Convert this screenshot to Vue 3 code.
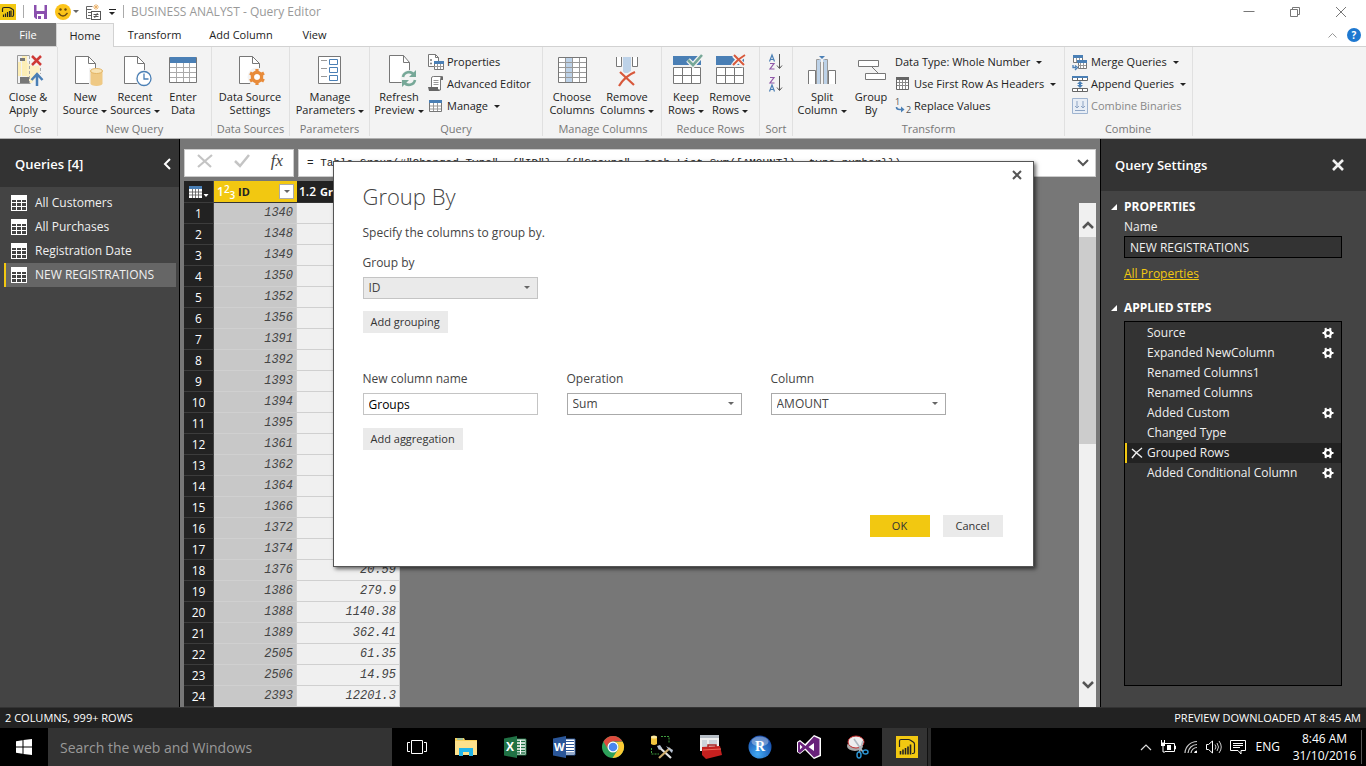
<script setup>
import { ref } from 'vue'

const queries = ['All Customers', 'All Purchases', 'Registration Date', 'NEW REGISTRATIONS']
const activeQuery = ref('NEW REGISTRATIONS')
const queryName = ref('NEW REGISTRATIONS')
const formula = ref('= Table.Group(#"Changed Type", {"ID"}, {{"Groups", each List.Sum([AMOUNT]), type number}})')
const columnName = ref('Groups')
const search = ref('')

const steps = [
  { name: 'Source', gear: true },
  { name: 'Expanded NewColumn', gear: true },
  { name: 'Renamed Columns1' },
  { name: 'Renamed Columns' },
  { name: 'Added Custom', gear: true },
  { name: 'Changed Type' },
  { name: 'Grouped Rows', gear: true },
  { name: 'Added Conditional Column', gear: true },
]
const activeStep = ref('Grouped Rows')

const ids = [1340, 1348, 1349, 1350, 1352, 1356, 1391, 1392, 1393, 1394, 1395, 1361,
  1362, 1364, 1366, 1372, 1374, 1376, 1386, 1388, 1389, 2505, 2506, 2393]
const sums = { 1376: '20.59', 1386: '279.9', 1388: '1140.38', 1389: '362.41', 2505: '61.35', 2506: '14.95', 2393: '12201.3' }
</script>

<template>
  <div class="screen">
    <div class="window">
      <header class="titlebar">
        <svg class="logo" width="16" height="16" viewBox="0 0 16 16">
          <rect width="16" height="16" fill="#f2c811" />
          <path d="M2.500 8V5q0-1.500 1.500-1.500h5q1 0 1.500.5l2 1.200q1 .5 1 1.300V11q0 1.500-1.500 1.500" fill="none" stroke="#222" stroke-width="1.200" />
          <path d="M3.500 13v-2.500M5.500 13V9.500M7.500 13V8M9.500 13V7M11 13V6.500" stroke="#222" stroke-width="1.200" />
        </svg>
        <span class="vbar"></span>
        <button class="plain" aria-label="Save">
          <svg width="16" height="16" viewBox="0 0 16 16">
            <path d="M1 1h13v14H3L1 13z" fill="#8a4fae" /><path d="M3.500 1h8v6h-8z" fill="#fff" /><path d="M4 10h7v5H4z" fill="#fff" /><path d="M5 12h3v3H5z" fill="#8a4fae" />
          </svg>
        </button>
        <button class="plain smile" aria-label="Feedback">
          <svg width="16" height="16" viewBox="0 0 16 16">
            <circle cx="8" cy="8" r="8" fill="#fcc419" /><circle cx="5.500" cy="5.500" r="1.200" fill="#6b4b10" /><circle cx="10.500" cy="5.500" r="1.200" fill="#6b4b10" /><path d="M3.500 9q4.500 6 9 0" fill="none" stroke="#6b4b10" stroke-width="1.300" />
          </svg>
          <i class="caret soft"></i>
        </button>
        <button class="plain" aria-label="Refresh all">
          <svg width="16" height="16" viewBox="0 0 16 16">
            <path d="M.5 2.500h6M.5 5.500h5M.5 2.500v12h4M2 8.500h3M2 11.500h3" stroke="#666" fill="none" />
            <rect x="5.500" y="7.500" width="9" height="8" fill="#fff" stroke="#555" />
            <path d="M7.500 10.500h5M7.500 12.500h5M11.500 9l-3 5" stroke="#555" />
            <path d="M10 0v6M7 3h6M8 1l4 4M12 1l-4 4" stroke="#e8a95a" stroke-width=".8" />
          </svg>
        </button>
        <button class="plain overflow" aria-label="Customize toolbar"><i></i><i class="caret"></i></button>
        <span class="vbar"></span>
        <span class="title">BUSINESS ANALYST - Query Editor</span>
        <div class="wincontrols">
          <button class="plain" aria-label="Minimize"><svg width="12" height="12" viewBox="0 0 12 12"><path d="M.5 5.500h11" stroke="#777" /></svg></button>
          <button class="plain" aria-label="Restore"><svg width="12" height="12" viewBox="0 0 12 12"><path d="M1.500 3.500h7v7h-7zM3.500 3V1.500h7v7H9" fill="none" stroke="#777" /></svg></button>
          <button class="plain" aria-label="Close"><svg width="12" height="12" viewBox="0 0 12 12"><path d="M1 1l10 10M11 1L1 11" stroke="#777" /></svg></button>
        </div>
      </header>

      <nav class="tabs">
        <button class="tab file">File</button>
        <button class="tab home">Home</button>
        <button class="tab transform">Transform</button>
        <button class="tab addcol">Add Column</button>
        <button class="tab view">View</button>
        <div class="tabtools">
          <svg width="9" height="6" viewBox="0 0 9 6"><path d="M.5 5.500l4-4 4 4" fill="none" stroke="#999" /></svg>
          <button class="help" aria-label="Help">?</button>
        </div>
      </nav>

      <section class="ribbon">
        <div class="group g-close">
          <div class="items">
            <button class="big b56">
              <svg viewBox="0 0 32 32"><path d="M5.500 1.500h12M5.500 1.500v28h13" stroke="#999" fill="none" /><path d="M6 8h3v14H6zM10 2h5v20h-5z" fill="#fdeeb5" /><path d="M15 8q4 6 12 3l1 6-8 12h-3l-2-6z" fill="#fdf1c4" /><path d="M17.500 2v27M28.500 14v6" stroke="#aaa" fill="none" stroke-dasharray="3 2" /><path d="M8 4h5v3H8zM8 23h9v6H8z" fill="#777" /><path d="M20 2l9 9M29 2l-9 9" stroke="#cf3a36" stroke-width="2.500" /><path d="M25 32V21M19.500 26l5.500-6 5.500 6" fill="none" stroke="#4a7fb5" stroke-width="2.500" /></svg>
              <span>Close &amp;</span><span>Apply<i class="caret"></i></span>
            </button>
          </div>
          <div class="gname">Close</div>
        </div>
        <div class="group g-new">
          <div class="items">
            <button class="big b50">
              <svg viewBox="0 0 32 32"><path d="M6.500 2.500h13l7 7v20h-20z" fill="#fff" stroke="#777" /><path d="M19.500 2.500v7h7" fill="none" stroke="#777" /><path d="M20 14h15v19H20z" fill="#f3f3f3" /><path d="M21.500 17v12.500a6 2.500 0 0 0 12 0V17z" fill="#efc984" /><ellipse cx="27.500" cy="17" rx="6" ry="2.500" fill="#f8e3b4" stroke="#e3b566" /></svg>
              <span>New</span><span>Source<i class="caret"></i></span>
            </button>
            <button class="big b50">
              <svg viewBox="0 0 32 32"><path d="M5.500 2.500h13l7 7v20h-20z" fill="#fff" stroke="#777" /><path d="M18.500 2.500v7h7" fill="none" stroke="#777" /><circle cx="25" cy="24.500" r="8.500" fill="#f3f3f3" /><circle cx="25" cy="24.500" r="7" fill="#fff" stroke="#4a7fb5" stroke-width="1.300" /><path d="M25 19.500v5.500h4.500" fill="none" stroke="#4a7fb5" stroke-width="1.300" /></svg>
              <span>Recent</span><span>Sources<i class="caret"></i></span>
            </button>
            <button class="big b46">
              <svg viewBox="0 0 32 32"><path d="M2.500 3.500h27v25h-27z" fill="#fff" stroke="#777" /><path d="M3 3h26v6H3z" fill="#4a7fb5" /><path d="M3 13.500h26M3 18.500h26M3 23.500h26M9.500 9v19M16.500 9v19M22.500 9v19" stroke="#aaa" /></svg>
              <span>Enter</span><span>Data</span>
            </button>
          </div>
          <div class="gname">New Query</div>
        </div>
        <div class="group g-source">
          <div class="items">
            <button class="big b76">
              <svg viewBox="0 0 32 32"><path d="M5.500 2.500h13l7 7v20h-20z" fill="#fff" stroke="#777" /><path d="M18.500 2.500v7h7" fill="none" stroke="#777" /><circle cx="23" cy="23" r="9.500" fill="#f3f3f3" /><circle cx="23" cy="23" r="4.500" fill="none" stroke="#e88b3a" stroke-width="3.500" /><path d="M23 19v-4M23 27v4M19.500 21l-3.500-2M26.500 25l3.500 2M19.500 25l-3.500 2M26.500 21l3.500-2" stroke="#e88b3a" stroke-width="3.200" /><circle cx="23" cy="23" r="2.800" fill="#fff" /></svg>
              <span>Data Source</span><span>Settings</span>
            </button>
          </div>
          <div class="gname">Data Sources</div>
        </div>
        <div class="group g-params">
          <div class="items">
            <button class="big b76">
              <svg viewBox="0 0 32 32"><path d="M4.500 2.500h22v27h-22z" fill="#fff" stroke="#777" /><path d="M7 6.500h6M7 14.500h6M7 22.500h6" stroke="#999" /><path d="M15.500 5.500h8v5h-8zM15.500 13.500h8v5h-8zM15.500 21.500h8v5h-8z" fill="#fff" stroke="#4a7fb5" /></svg>
              <span>Manage</span><span>Parameters<i class="caret"></i></span>
            </button>
          </div>
          <div class="gname">Parameters</div>
        </div>
        <div class="group g-query">
          <div class="items">
            <button class="big b54">
              <svg viewBox="0 0 32 32"><path d="M6.500 1.500h14l6 7v20h-20z" fill="#fff" stroke="#777" /><path d="M20.500 1.500v7h6" fill="none" stroke="#777" /><circle cx="26" cy="24.500" r="8.500" fill="#f3f3f3" /><path d="M20 23a6 6 0 0 1 11-2M32 26a6 6 0 0 1-11 2" fill="none" stroke="#77a898" stroke-width="2.600" /><path d="M33 16v7h-7zM19 33v-7h7z" fill="#77a898" /></svg>
              <span>Refresh</span><span>Preview<i class="caret"></i></span>
            </button>
            <div class="stack">
              <button class="small">
                <svg viewBox="0 0 16 16"><path d="M6 12.500H.5V.5h7l3 3V7" fill="#fff" stroke="#777" /><path d="M7.500.5v3h3" fill="none" stroke="#777" /><circle cx="3" cy="6" r="1" fill="#777" /><circle cx="3" cy="9.500" r="1" fill="#777" /><path d="M6.500 8.500h9v7h-9z" fill="#fff" stroke="#777" /><path d="M6 7h10v3H6z" fill="#4a7fb5" /><path d="M6 12.500h9M9.500 10v5M12.500 10v5" stroke="#999" /></svg>Properties
              </button>
              <button class="small">
                <svg viewBox="0 0 16 16"><path d="M3.500 11V2q0-1.500 2-1.500h9q-2 0-2 2V14H2" fill="#fff" stroke="#777" /><path d="M13 1h2v3h-2zM0 11h10v2l2 2H1z" fill="#666" /><path d="M5.500 4.500h5M5.500 6.500h5M5.500 8.500h5" stroke="#999" /></svg>Advanced Editor
              </button>
              <button class="small">
                <svg viewBox="0 0 16 16"><path d="M1.500 2.500h12v11h-12z" fill="#fff" stroke="#777" /><path d="M1 2h13v3H1z" fill="#4a7fb5" /><path d="M2 8h11M2 11h11M5.500 5v8M9.500 5v8" stroke="#999" /></svg>Manage<i class="caret"></i>
              </button>
            </div>
          </div>
          <div class="gname">Query</div>
        </div>
        <div class="group g-cols">
          <div class="items">
            <button class="big b50">
              <svg viewBox="0 0 32 32"><path d="M2.500 3.500h28v25h-28z" fill="#fff" stroke="#777" /><path d="M9 4h8v24H9z" fill="#bdd2e8" /><path d="M3 8.500h27M3 13.500h27M3 18.500h27M3 23.500h27M9.500 4v24M16.500 4v24M23.500 4v24" stroke="#999" /></svg>
              <span>Choose</span><span>Columns</span>
            </button>
            <button class="big b60">
              <svg viewBox="0 0 32 32"><path d="M5.500 3v9.500h5V3M21.500 3v9.500h5V3" fill="#fff" stroke="#777" /><path d="M12 3h8v16h-8z" fill="#bdd2e8" /><path d="M9 18l14 13M23 18Q15 22 9 32" stroke="#f3f3f3" stroke-width="5" fill="none" /><path d="M9 18l14 13M24 18Q14 22 8 32" stroke="#d8583b" stroke-width="2.200" fill="none" /></svg>
              <span>Remove</span><span>Columns<i class="caret"></i></span>
            </button>
          </div>
          <div class="gname">Manage Columns</div>
        </div>
        <div class="group g-rows">
          <div class="items">
            <button class="big b44">
              <svg viewBox="0 0 32 32"><path d="M3 2h28v9H3z" fill="#4a7fb5" /><path d="M3.500 13.500h27v16h-27z" fill="#fff" stroke="#777" /><path d="M3 21.500h27M12.500 14v15M21.500 14v15" stroke="#777" /><path d="M18 6l5 5L32 1" stroke="#f3f3f3" stroke-width="5" fill="none" /><path d="M18 6l5 5L32 1" stroke="#77a898" stroke-width="2.600" fill="none" /></svg>
              <span>Keep</span><span>Rows<i class="caret"></i></span>
            </button>
            <button class="big b44">
              <svg viewBox="0 0 32 32"><path d="M2 2h28v9H2z" fill="#4a7fb5" /><path d="M2.500 13.500h27v16h-27z" fill="#fff" stroke="#777" /><path d="M2 21.500h27M11.500 14v15M20.500 14v15" stroke="#777" /><path d="M20 1l10 11M31 1Q24 5 19 12" stroke="#f3f3f3" stroke-width="5" fill="none" /><path d="M20 1l10 10M31 1Q24 5 19 11" stroke="#d8583b" stroke-width="2" fill="none" /></svg>
              <span>Remove</span><span>Rows<i class="caret"></i></span>
            </button>
          </div>
          <div class="gname">Reduce Rows</div>
        </div>
        <div class="group g-sort">
          <div class="stack">
            <button class="small sort" aria-label="Sort ascending"><svg viewBox="0 0 16 16"><path d="M1.500 7.500L4 1l2.500 6.500M2.500 5.500h3" fill="none" stroke="#4a7fb5" stroke-width="1.200" /><path d="M2 9.500h4L2 15h4.500" fill="none" stroke="#9058a8" stroke-width="1.200" /><path d="M11.500 0v14M9 11.500l2.500 3 2.500-3" fill="none" stroke="#555" /></svg></button>
            <button class="small sort" aria-label="Sort descending"><svg viewBox="0 0 16 16"><path d="M2 1.500h4L2 7h4.500" fill="none" stroke="#9058a8" stroke-width="1.200" /><path d="M1.500 15.500L4 9l2.500 6.500M2.500 13.500h3" fill="none" stroke="#4a7fb5" stroke-width="1.200" /><path d="M11.500 0v14M9 11.500l2.500 3 2.500-3" fill="none" stroke="#555" /></svg></button>
          </div>
          <div class="gname">Sort</div>
        </div>
        <div class="group g-trans">
          <div class="items">
            <button class="big b54">
              <svg viewBox="0 0 32 32"><path d="M2.500 30V16.500h7V30M22.500 30V16.500h7V30" fill="#fff" stroke="#777" /><path d="M11 5h4v25h-4zM17 5h4v25h-4z" fill="#bdd2e8" /><path d="M10.500 30V5.500h3M21.500 30V5.500h-3M14.500 8v22M17.500 8v22" stroke="#999" fill="none" /><path d="M13 2h6l-3 3z" fill="#4a7fb5" /></svg>
              <span>Split</span><span>Column<i class="caret"></i></span>
            </button>
            <button class="big b44">
              <svg viewBox="0 0 32 32"><path d="M3.500 6.500h20v6h-20zM10.500 19.500h20v6h-20z" fill="#fff" stroke="#777" /><path d="M17 13l6 6" stroke="#777" /></svg>
              <span>Group</span><span>By</span>
            </button>
            <div class="stack">
              <button class="small">Data Type: Whole Number<i class="caret"></i></button>
              <button class="small">
                <svg viewBox="0 0 16 16"><path d="M1.500 1.500h12v12h-12z" fill="#fff" stroke="#666" /><path d="M1 1h13v3H1z" fill="#666" /><path d="M2 6.500h11M2 9.500h11M4.500 4v9M7.500 4v9M10.500 4v9" stroke="#888" /></svg>Use First Row As Headers<i class="caret"></i>
              </button>
              <button class="small">
                <svg viewBox="0 0 16 16"><text x="0" y="7" font-size="9" fill="#555">1</text><text x="11" y="15" font-size="9" fill="#555">2</text><path d="M1.500 9q0 2.500 3 2.500h3" fill="none" stroke="#4a7fb5" stroke-width="1.600" /><path d="M6 8.500l3.500 3L6 14.500z" fill="#4a7fb5" /></svg>Replace Values
              </button>
            </div>
          </div>
          <div class="gname">Transform</div>
        </div>
        <div class="group g-combine">
          <div class="stack">
            <button class="small">
              <svg viewBox="0 0 16 16"><path d="M1.500 1.500h9v7h-9zM6.500 7.500h8v7h-8z" fill="#fff" stroke="#777" /><path d="M1 1h10v3H1zM5 6h10v3H5z" fill="#4a7fb5" /><path d="M4.500 4v4M7.500 4v2M8.500 9v5M11.500 9v5M6 11.500h8" stroke="#999" /><path d="M1 11v2.500h3M3 11.500l2.500 2L3 16" fill="none" stroke="#4a7fb5" stroke-width="1.300" /></svg>Merge Queries<i class="caret"></i>
            </button>
            <button class="small">
              <svg viewBox="0 0 16 16"><path d="M.5 1.500h15v3H.5zM.5 12.500h15v3H.5z" fill="#fff" stroke="#666" /><path d="M0 0h16v2H0z" fill="#4a7fb5" /><path d="M5.500 2v3M10.500 2v3M5.500 12v3M10.500 12v3" stroke="#666" /><path d="M8 5l3 3H9v1h2l-3 3-3-3h2V8H5z" fill="#4a7fb5" /></svg>Append Queries<i class="caret"></i>
            </button>
            <button class="small" disabled>
              <svg viewBox="0 0 16 16"><path d="M.5.5h15v15H.5z" fill="#e8eef6" stroke="#9fb4d0" /><path d="M5 3v7M3 8l2 2 2-2M11 3v7M9 8l2 2 2-2M3 12.500h10" fill="none" stroke="#8da4c4" /></svg>Combine Binaries
            </button>
          </div>
          <div class="gname">Combine</div>
        </div>
      </section>

      <main class="work">
        <aside class="queries">
          <h2 class="panelhead">Queries [4]
            <button class="plain" aria-label="Collapse"><svg width="8" height="12" viewBox="0 0 8 12"><path d="M7 1L2 6l5 5" fill="none" stroke="#fff" stroke-width="2" /></svg></button>
          </h2>
          <div class="qlist">
            <button v-for="q in queries" :key="q" class="query" :class="{ on: q === activeQuery }" @click="activeQuery = q">
              <svg width="16" height="16" viewBox="0 0 16 16"><path d="M0 0h16v16H0z" fill="#fff" /><path d="M1 5h4v2H1zM6 5h4v2H6zM11 5h4v2h-4zM1 8h4v3H1zM6 8h4v3H6zM11 8h4v3h-4zM1 12h4v3H1zM6 12h4v3H6zM11 12h4v3h-4z" fill="#444" /></svg>{{ q }}
            </button>
          </div>
        </aside>

        <section class="center">
          <div class="fbar">
            <div class="fbuttons">
              <button class="plain" aria-label="Cancel edit"><svg width="16" height="16" viewBox="0 0 16 16"><path d="M1 2l13 12M15 2L1 14" stroke="#c4c4c4" stroke-width="2.200" /></svg></button>
              <button class="plain" aria-label="Accept edit"><svg width="16" height="16" viewBox="0 0 16 16"><path d="M1 8l5 5L15 2" fill="none" stroke="#c4c4c4" stroke-width="2.500" /></svg></button>
              <button class="plain fx" aria-label="Insert step">fx</button>
            </div>
            <div class="formula">
              <input v-model="formula" aria-label="Formula" spellcheck="false">
              <svg width="12" height="8" viewBox="0 0 12 8"><path d="M1 1l5 5 5-5" fill="none" stroke="#555" stroke-width="2" /></svg>
            </div>
          </div>
          <div class="gridarea">
            <table class="grid">
              <thead>
                <tr>
                  <th class="num">
                    <svg width="20" height="12" viewBox="0 0 20 12"><path d="M0 0h13v12H0z" fill="#fff" /><path d="M0 0h13v3H0z" fill="#4a7fb5" /><path d="M0 6h13M0 9h13M3.500 3v9M6.500 3v9M9.500 3v9" stroke="#555" stroke-width=".8" /><path d="M14.500 8h5L17 11z" fill="#fff" /></svg>
                  </th>
                  <th class="idcol"><div class="th"><span class="digits">1<sup>2</sup><sub>3</sub></span><b>ID</b><button class="filter" aria-label="Filter ID"><i class="caret soft"></i></button></div></th>
                  <th class="sumcol"><div class="th"><span class="dec">1.2</span><b>Groups</b></div></th>
                </tr>
              </thead>
              <tbody>
                <tr v-for="(id, i) in ids" :key="id">
                  <td class="num">{{ i + 1 }}</td><td class="idcol">{{ id }}</td><td class="sumcol">{{ sums[id] }}</td>
                </tr>
              </tbody>
            </table>
            <div class="scroll">
              <svg width="12" height="8" viewBox="0 0 12 8"><path d="M1 7l5-5 5 5" fill="none" stroke="#555" stroke-width="2.500" /></svg>
              <div class="thumb"></div>
              <svg width="12" height="8" viewBox="0 0 12 8"><path d="M1 1l5 5 5-5" fill="none" stroke="#555" stroke-width="2.500" /></svg>
            </div>
          </div>
        </section>

        <aside class="settings">
          <h2 class="panelhead">Query Settings
            <button class="plain" aria-label="Close settings"><svg width="12" height="12" viewBox="0 0 12 12"><path d="M1 1l10 10M11 1L1 11" stroke="#f0f0f0" stroke-width="2.600" /></svg></button>
          </h2>
          <div class="sbody">
            <h3><svg width="6" height="6" viewBox="0 0 6 6"><path d="M6 0v6H0z" fill="#fff" /></svg>PROPERTIES</h3>
            <label for="qname">Name</label>
            <input id="qname" v-model="queryName" class="qname" spellcheck="false">
            <a href="#">All Properties</a>
            <h3 class="second"><svg width="6" height="6" viewBox="0 0 6 6"><path d="M6 0v6H0z" fill="#fff" /></svg>APPLIED STEPS</h3>
            <ul class="steps">
              <li v-for="s in steps" :key="s.name" :class="{ on: s.name === activeStep }" @click="activeStep = s.name">
                <span class="mark"><svg v-if="s.name === activeStep" width="10" height="10" viewBox="0 0 10 10"><path d="M0 1l10 8.500M10 0Q4 4 0 10" stroke="#eee" stroke-width="1.500" fill="none" /></svg></span>
                {{ s.name }}
                <button v-if="s.gear" class="plain gear" :aria-label="'Edit ' + s.name">
                  <svg width="12" height="12" viewBox="0 0 12 12"><circle cx="6" cy="6" r="3" fill="none" stroke="#fff" stroke-width="2.200" /><path d="M.5 6h2M9.500 6h2M3.200 1.200l1 1.600M8.800 1.200l-1 1.600M3.200 10.800l1-1.600M8.800 10.800l-1-1.600" stroke="#fff" stroke-width="2.200" /></svg>
                </button>
              </li>
            </ul>
          </div>
        </aside>
      </main>

      <footer class="status"><span>2 COLUMNS, 999+ ROWS</span><span>PREVIEW DOWNLOADED AT 8:45 AM</span></footer>

      <div class="overlay">
        <form class="dialog" @submit.prevent>
          <button type="button" class="plain x" aria-label="Close dialog"><svg width="10" height="10" viewBox="0 0 10 10"><path d="M1 1l8 8M9 1L1 9" stroke="#555" stroke-width="2" /></svg></button>
          <h1>Group By</h1>
          <p>Specify the columns to group by.</p>
          <label for="by">Group by</label>
          <div class="pick gray"><select id="by"><option>ID</option></select><i class="caret soft"></i></div>
          <button type="button" class="btn add">Add grouping</button>
          <div class="agg">
            <div><label for="cn">New column name</label><input id="cn" v-model="columnName" class="box" spellcheck="false"></div>
            <div><label for="op">Operation</label><div class="pick"><select id="op"><option>Sum</option></select><i class="caret soft"></i></div></div>
            <div><label for="col">Column</label><div class="pick"><select id="col"><option>AMOUNT</option></select><i class="caret soft"></i></div></div>
          </div>
          <button type="button" class="btn add second">Add aggregation</button>
          <div class="actions"><button class="btn ok">OK</button><button type="button" class="btn">Cancel</button></div>
        </form>
      </div>
    </div>

    <footer class="taskbar">
      <button class="start" aria-label="Start"><svg width="16" height="16" viewBox="0 0 16 16"><path d="M0 2.200L6.500 1.200v6.300H0zM7.500 1L16 0v7.500H7.500zM0 8.500h6.500v6.300L0 13.800zM7.500 8.500H16V16l-8.500-1z" fill="#fff" /></svg></button>
      <input v-model="search" class="search" placeholder="Search the web and Windows" aria-label="Search the web and Windows">
      <div class="apps">
        <button aria-label="Task view"><svg width="20" height="16" viewBox="0 0 20 16"><path d="M4.500 1.500h11v13h-11zM3 3.500H.5v9H3M17 3.500h2.500v9H17" fill="none" stroke="#fff" /></svg></button>
        <button aria-label="File Explorer"><svg width="22" height="20" viewBox="0 0 22 20"><path d="M0 1h9l1 2h12v15H0z" fill="#f7cf5a" /><path d="M0 4h22v14H0z" fill="#fde18c" /><path d="M4 19v-8h14v8h-4v-4H8v4z" fill="#20b5ea" /><path d="M2 2h6" stroke="#4ab5e0" /></svg></button>
        <button aria-label="Excel"><svg width="22" height="22" viewBox="0 0 22 22"><path d="M11 3h11v16H11z" fill="#fff" stroke="#207245" /><path d="M13 5.500h3M17 5.500h4M13 8.500h3M17 8.500h4M13 11.500h3M17 11.500h4M13 14.500h3M17 14.500h4M13 17h3M17 17h4" stroke="#207245" stroke-width="1.500" /><path d="M0 2.500L13 0v22L0 19.500z" fill="#207245" /><text x="2" y="15" font-size="12" font-weight="700" fill="#fff">X</text></svg></button>
        <button aria-label="Word"><svg width="22" height="22" viewBox="0 0 22 22"><path d="M11 3h11v16H11z" fill="#fff" stroke="#2a5699" /><path d="M13 5.500h8M13 8.500h8M13 11.500h8M13 14.500h8M13 17h8" stroke="#2a5699" /><path d="M0 2.500L13 0v22L0 19.500z" fill="#2a5699" /><text x="1" y="15" font-size="11" font-weight="700" fill="#fff">W</text></svg></button>
        <button aria-label="Chrome"><svg width="22" height="22" viewBox="0 0 22 22"><circle cx="11" cy="11" r="11" fill="#2da15a" /><path d="M1.500 5.500A11 11 0 0 1 20.500 5.500H11A5.500 5.500 0 0 0 6 13.500z" fill="#dd4b3e" /><path d="M20.700 5.800A11 11 0 0 1 10.500 22L16 13.500A5.500 5.500 0 0 0 13.500 6z" fill="#fcc934" /><circle cx="11" cy="11" r="5.500" fill="#fff" /><circle cx="11" cy="11" r="4.300" fill="#4a86f0" /></svg></button>
        <button aria-label="SQL tools"><svg width="24" height="24" viewBox="0 0 24 24"><path d="M1 2v7q3 2 6 0V2z" fill="#f2c53d" /><ellipse cx="4" cy="2" rx="3" ry="1.500" fill="#fbe9a0" /><path d="M11 1.500h8V8M1.500 13v6H9" fill="none" stroke="#3f9b3f" stroke-dasharray="2 1" /><path d="M9 12l12 11" stroke="#e5e5e5" stroke-width="2.200" /><path d="M20 13L9 23" stroke="#caa96a" stroke-width="2.200" /><path d="M16 11l7 4-1 3-3-3zM7 11l3-1 2 3-3 2z" fill="#b9c4d4" /></svg></button>
        <button aria-label="Configuration tools"><svg width="22" height="24" viewBox="0 0 22 24"><path d="M0 0h19v16H0z" fill="#eee" /><path d="M0 0h19v3H0z" fill="#b5bcc4" /><path d="M2 5h5v7H2zM9 5h8v4H9z" fill="#ccd3da" /><path d="M8 12v-2h8v2" fill="none" stroke="#a31f1f" stroke-width="1.500" /><path d="M2 12l18-1 2 9-16 4-4-4z" fill="#c4201f" /><path d="M3 15l18-1" stroke="#ee6a5c" /></svg></button>
        <button aria-label="R"><svg width="24" height="24" viewBox="0 0 24 24"><defs><radialGradient id="rball" cx=".4" cy=".8" r=".8"><stop offset="0" stop-color="#41a8f2" /><stop offset="1" stop-color="#1447a5" /></radialGradient></defs><circle cx="12" cy="12" r="11.500" fill="url(#rball)" /><ellipse cx="12" cy="6.500" rx="8.500" ry="5" fill="#fff" opacity=".35" /><text x="7" y="16" font-size="14" class="serif" fill="#fff" font-weight="700">R</text></svg></button>
        <button aria-label="Visual Studio"><svg width="24" height="24" viewBox="0 0 24 24"><path d="M0 7l3-2 5 4 9-9 7 3v18l-7 3-9-9-5 4-3-2z" fill="#fff" /><path d="M1 7.500L3 6.500l5.500 4.500L17 1.500l5.500 2.500v16L17 22.500 8.500 13.500 3 18l-2-1zM3 9.500v5L5.500 12zM17 8l-5.500 4 5.500 4z" fill="#68217a" fill-rule="evenodd" /></svg></button>
        <button aria-label="Snipping tool"><svg width="22" height="24" viewBox="0 0 22 24"><ellipse cx="8" cy="11" rx="8" ry="5" fill="#aaa" /><ellipse cx="9" cy="7" rx="8" ry="6" fill="#eee" stroke="#c22d2d" /><path d="M7 4l9 13M16 6l-4 12" stroke="#aeb7bf" stroke-width="1.600" /><ellipse cx="12" cy="20" rx="2" ry="3" fill="none" stroke="#2a91cf" stroke-width="1.500" /><ellipse cx="18.500" cy="17" rx="2.500" ry="2" fill="none" stroke="#2a91cf" stroke-width="1.500" /></svg></button>
        <button class="active" aria-label="Power BI"><svg width="22" height="22" viewBox="0 0 22 22"><path d="M0 0h22v22H0z" fill="#f2c811" /><path d="M3.500 11V5q0-1.500 1.500-1.500h7.500q1 0 2 .8l3 2q1 .7 1 2V16q0 1.500-1.500 1.500h-1" fill="none" stroke="#222" stroke-width="1.200" /><path d="M4.500 18.500v-3.500M7 18.500v-5M9.500 18.500V12M12 18.500v-8M14.500 18.500V8.500" stroke="#222" stroke-width="1.600" /></svg></button>
      </div>
      <div class="tray">
        <svg width="12" height="8" viewBox="0 0 12 8"><path d="M1 7l5-5 5 5" fill="none" stroke="#ddd" stroke-width="1.200" /></svg>
        <svg width="16" height="14" viewBox="0 0 16 14"><path d="M5 3.500h9.500v8H5M14.500 6h1v3h-1M1 3h4M1.500 0v3M4.500 0v3M3 6v6h2" fill="none" stroke="#fff" /><path d="M7 5h4v5H7zM1 3h4v3H1z" fill="#fff" /></svg>
        <svg width="14" height="14" viewBox="0 0 14 14"><path d="M1 13A12 12 0 0 1 13 1.500M4 13a9 9 0 0 1 9-8.500M7 13a6 6 0 0 1 6-5.500" fill="none" stroke="#ccc" stroke-width="1.200" /><path d="M10 13a3 3 0 0 1 3-2.500V13z" fill="#fff" /></svg>
        <svg width="16" height="14" viewBox="0 0 16 14"><path d="M.5 4.500h2L6.500 1v12L2.500 9.500h-2z" fill="none" stroke="#fff" /><path d="M9 4.500q2 2.500 0 5M11 3q3 4 0 8M13 1q4.500 6 0 12" fill="none" stroke="#ccc" /></svg>
        <svg width="16" height="16" viewBox="0 0 16 16"><path d="M.5 1.500h15v10H11V15l-3-3.500H.5z" fill="none" stroke="#fff" /><path d="M3 4.500h10M3 6.500h10M3 8.500h7" stroke="#fff" /></svg>
        <span class="lang">ENG</span>
        <div class="clock"><span>8:46 AM</span><span>31/10/2016</span></div>
      </div>
    </footer>
  </div>
</template>

<style>
body { margin: 0; overflow: hidden; }
</style>

<style scoped>
* { box-sizing: border-box; }
.screen { height: 100vh; display: flex; flex-direction: column; font: 12px/16px "Open Sans", "Noto Sans", sans-serif; color: #222; background: #000; }
button, input, select { font: inherit; color: inherit; margin: 0; padding: 0; border: 0; background: none; border-radius: 0; outline: 0; }
button { white-space: nowrap; }
svg { display: block; flex: none; overflow: visible; }
.plain { display: flex; align-items: center; }
.caret { display: inline-block; flex: none; border: 3px solid transparent; border-top-color: #222; border-bottom: 0; margin-left: 3px; vertical-align: middle; }
.caret.soft { border-top-color: #666; }
.window { position: relative; flex: 1; min-height: 0; display: flex; flex-direction: column; background: #fff; }

.titlebar { display: flex; align-items: center; height: 23px; }
.vbar { width: 1px; height: 13px; background: #aaa; margin: 0 7px; }
.titlebar .logo + .vbar { margin-right: 9px; }
.smile { margin: 0 7px 0 6px; }
.smile .caret { margin-left: 2px; }
.overflow { flex-direction: column; gap: 2px; width: 8px; margin-left: 6px; }
.overflow i:first-child { width: 7px; height: 1px; background: #222; }
.overflow .caret { margin: 0; }
.title { color: #999; }
.wincontrols { margin-left: auto; display: flex; gap: 34px; padding-right: 19px; }

.tabs { display: flex; height: 24px; border-bottom: 1px solid #d2d2d2; font-size: 11px; }
.tab { height: 23px; }
.file { width: 56px; background: #777; color: #fff; }
.home { width: 58px; height: 24px; background: #f3f3f3; border: 1px solid #d2d2d2; border-bottom: 0; }
.transform { width: 81px; }
.addcol { width: 92px; }
.view { width: 55px; }
.tabtools { margin-left: auto; display: flex; align-items: center; gap: 10px; padding-right: 5px; }
.help { width: 14px; height: 14px; border-radius: 7px; background: #1e78d0; color: #fff; font-weight: 700; font-size: 10px; line-height: 14px; }

.ribbon { display: flex; background: #f3f3f3; height: 92px; border-bottom: 1px solid #b0b0b0; font-size: 11px; }
.group { flex: none; display: flex; flex-direction: column; justify-content: space-between; padding: 4px 2px 0; margin-bottom: 2px; border-right: 1px solid #e0e0e0; }
.items { display: flex; }
.gname { text-align: center; color: #777; white-space: nowrap; line-height: 14px; }
.g-close { width: 58px; padding-left: 0; }
.g-new { width: 154px; }
.g-source { width: 78px; padding: 4px 0 0; }
.g-params { width: 80px; }
.g-query { width: 173px; }
.g-cols { width: 119px; padding-left: 4px; }
.g-rows { width: 98px; }
.g-sort { width: 33px; }
.g-trans { width: 272px; }
.g-combine { width: 128px; padding-left: 5px; }
.g-combine .gname { padding-right: 4px; }
.big { flex: none; display: flex; flex-direction: column; align-items: center; line-height: 13px; padding-top: 3px; }
.big svg { width: 32px; height: 32px; margin-bottom: 4px; }
.b44 { width: 44px; }
.b46 { width: 46px; }
.b50 { width: 50px; }
.b54 { width: 54px; }
.b56 { width: 56px; }
.b60 { width: 60px; }
.b76 { width: 76px; }
.stack { display: flex; flex-direction: column; padding-left: 2px; }
.small { display: flex; align-items: center; height: 22px; gap: 3px; }
.small svg { width: 16px; height: 16px; }
.small:disabled { color: #888; }
.small.sort { padding-left: 4px; }

.work { flex: 1; min-height: 0; display: flex; background: #777; }
.panelhead { display: flex; align-items: center; justify-content: space-between; margin: 0; background: #333; color: #fff; font-size: 13px; font-weight: 600; }
.queries { width: 180px; background: #444; border-right: 1px solid #000; }
.queries .panelhead { height: 48px; padding: 2px 8px 0 15px; }
.qlist { padding: 4px 3px 0 4px; }
.query { display: flex; align-items: center; gap: 8px; width: 100%; height: 24px; padding-left: 5px; border-left: 2px solid transparent; color: #f0f0f0; }
.query.on { background: #666; border-color: #f2c811; }

.center { flex: 1; min-width: 0; display: flex; flex-direction: column; gap: 4px; padding: 10px 4px 0; }
.fbar { display: flex; gap: 4px; }
.fbuttons, .formula { display: flex; align-items: center; height: 28px; background: #fff; border: 1px solid #ccc; }
.fbuttons { width: 110px; padding: 0 10px 4px 12px; justify-content: space-between; }
.fx { font: italic 17px/20px "Liberation Serif", serif; color: #444; }
.formula { flex: 1; padding: 0 6px 0 8px; }
.formula input { flex: 1; font: 11px/16px "Liberation Mono", monospace; color: #222; }
.gridarea { flex: 1; min-height: 0; display: flex; justify-content: space-between; align-items: flex-start; overflow: hidden; }
.grid { border-spacing: 0; table-layout: fixed; width: 216px; color: #444; }
.grid th, .grid td { padding: 0; height: 21px; line-height: 16px; }
.grid thead th { height: 22px; background: #222; color: #fff; border-bottom: 1px solid #333; }
.grid .num { width: 30px; background: #222; color: #fff; text-align: center; border-right: 1px solid #444; border-bottom: 1px solid #3c3c3c; }
.grid th.num { padding-left: 5px; }
.grid td.num { padding-top: 2px; }
.grid .idcol { width: 83px; }
.grid .sumcol { width: 103px; }
.grid td { border-bottom: 1px solid #d0d0d0; }
.grid td.idcol, .grid td.sumcol { font: italic 12px/16px "Liberation Mono", monospace; text-align: right; padding-right: 3px; border-right: 1px solid #d0d0d0; }
.grid td.idcol { background: #c8c8c8; }
.grid td.sumcol { background: #f0f0f0; }
.grid thead th.idcol { background: #f2c811; color: #222; }
.th { display: flex; align-items: center; height: 20px; padding: 0 3px; }
.th b { font-size: 11px; font-weight: 700; }
.digits { width: 21px; color: #fff; font-size: 12px; font-weight: 600; text-align: left; white-space: nowrap; }
.digits sup, .digits sub { font-size: 10px; line-height: 0; }
.digits sup { vertical-align: 3px; }
.digits sub { vertical-align: -3px; }
.dec { font-weight: 600; font-size: 12px; margin: 0 4px 0 -1px; }
.filter { margin-left: auto; width: 15px; height: 15px; background: #fff; border: 1px solid #aaa; display: flex; align-items: center; justify-content: center; }
.filter .caret { margin: 0; }
.scroll { width: 17px; align-self: stretch; margin-top: 22px; background: #f0f0f0; display: flex; flex-direction: column; align-items: center; padding: 18px 0; }
.thumb { width: 100%; height: 207px; margin: 8px 0 auto; background: #ccc; }

.settings { width: 266px; background: #444; border-left: 1px solid #000; color: #f0f0f0; display: flex; flex-direction: column; }
.settings .panelhead { height: 52px; padding: 0 22px 0 14px; }
.sbody { flex: 1; min-height: 0; display: flex; flex-direction: column; align-items: flex-start; padding: 8px 24px 21px 23px; }
.sbody h3 { display: flex; align-items: center; gap: 7px; margin: 0 0 4px -13px; font-size: 12px; line-height: 16px; font-weight: 700; color: #fff; }
.sbody h3.second { margin: 18px 0 5px -13px; }
.qname { width: 100%; height: 22px; margin: 1px 0 8px; padding: 0 5px; background: #333; border: 1px solid #000; color: #f0f0f0; }
.sbody a { color: #f2c811; }
.steps { flex: 1; width: 100%; margin: 0; padding: 1px 0; list-style: none; background: #333; border: 1px solid #000; }
.steps li { display: flex; align-items: center; height: 20px; padding-right: 7px; border-left: 2px solid transparent; white-space: nowrap; }
.steps li.on { background: #222; border-color: #f2c811; }
.mark { width: 20px; padding-left: 5px; }
.gear { margin-left: auto; }

.status { display: flex; justify-content: space-between; align-items: center; height: 21px; padding: 0 5px; background: #222; color: #fff; font-size: 11px; border-top: 1px solid #333; }

.overlay { position: absolute; inset: 0; display: grid; place-items: center; }
.dialog { position: relative; width: 701px; padding: 19px 30px 29px 29px; background: #fff; border: 1px solid #555; box-shadow: 2px 2px 4px rgba(0, 0, 0, .6); color: #444; display: flex; flex-direction: column; align-items: flex-start; }
.x { position: absolute; top: 8px; right: 11px; }
.dialog h1 { margin: 0 0 14px; font-size: 22px; line-height: 30px; font-weight: 300; }
.dialog p { margin: 0 0 14px; font-size: 12px; line-height: 16px; }
.dialog label { display: block; margin-bottom: 6px; }
.pick { position: relative; width: 175px; height: 22px; border: 1px solid #aaa; background: #fff; }
.pick.gray { background: #eaeaea; border-color: #c4c4c4; }
.pick select { appearance: none; width: 100%; height: 100%; padding-left: 5px; }
.pick .caret { position: absolute; right: 7px; top: 8px; pointer-events: none; }
.box { display: block; width: 175px; height: 22px; padding: 0 5px; border: 1px solid #c4c4c4; color: #000; }
.btn { height: 22px; min-width: 60px; padding: 0 8px; background: #eaeaea; font-size: 11px; color: #333; }
.add { margin-top: 12px; }
.add.second { margin-top: 13px; }
.agg { display: flex; gap: 29px; margin-top: 38px; }
.actions { display: flex; gap: 13px; margin-top: 65px; align-self: flex-end; }
.btn.ok { background: #f2c811; }

.taskbar { display: flex; height: 38px; background: #000; color: #fff; }
.start { width: 48px; display: grid; place-items: center; }
.search { width: 344px; background: #333; padding: 2px 12px 0; font-size: 14px; }
.search::placeholder { color: #999; opacity: 1; }
.apps { display: flex; }
.apps button { width: 49px; height: 38px; display: grid; place-items: center; }
.apps .active { background: linear-gradient(90deg, #333 45px, #111 45px 46px, #2b2b2b 46px); }
.serif { font-family: "Liberation Serif", serif; }
.tray { margin-left: auto; display: flex; align-items: center; gap: 8px; padding-right: 4px; }
.lang { margin-left: 2px; }
.clock { display: flex; flex-direction: column; align-items: center; width: 74px; line-height: 17px; border-right: 1px solid #555; }
</style>
